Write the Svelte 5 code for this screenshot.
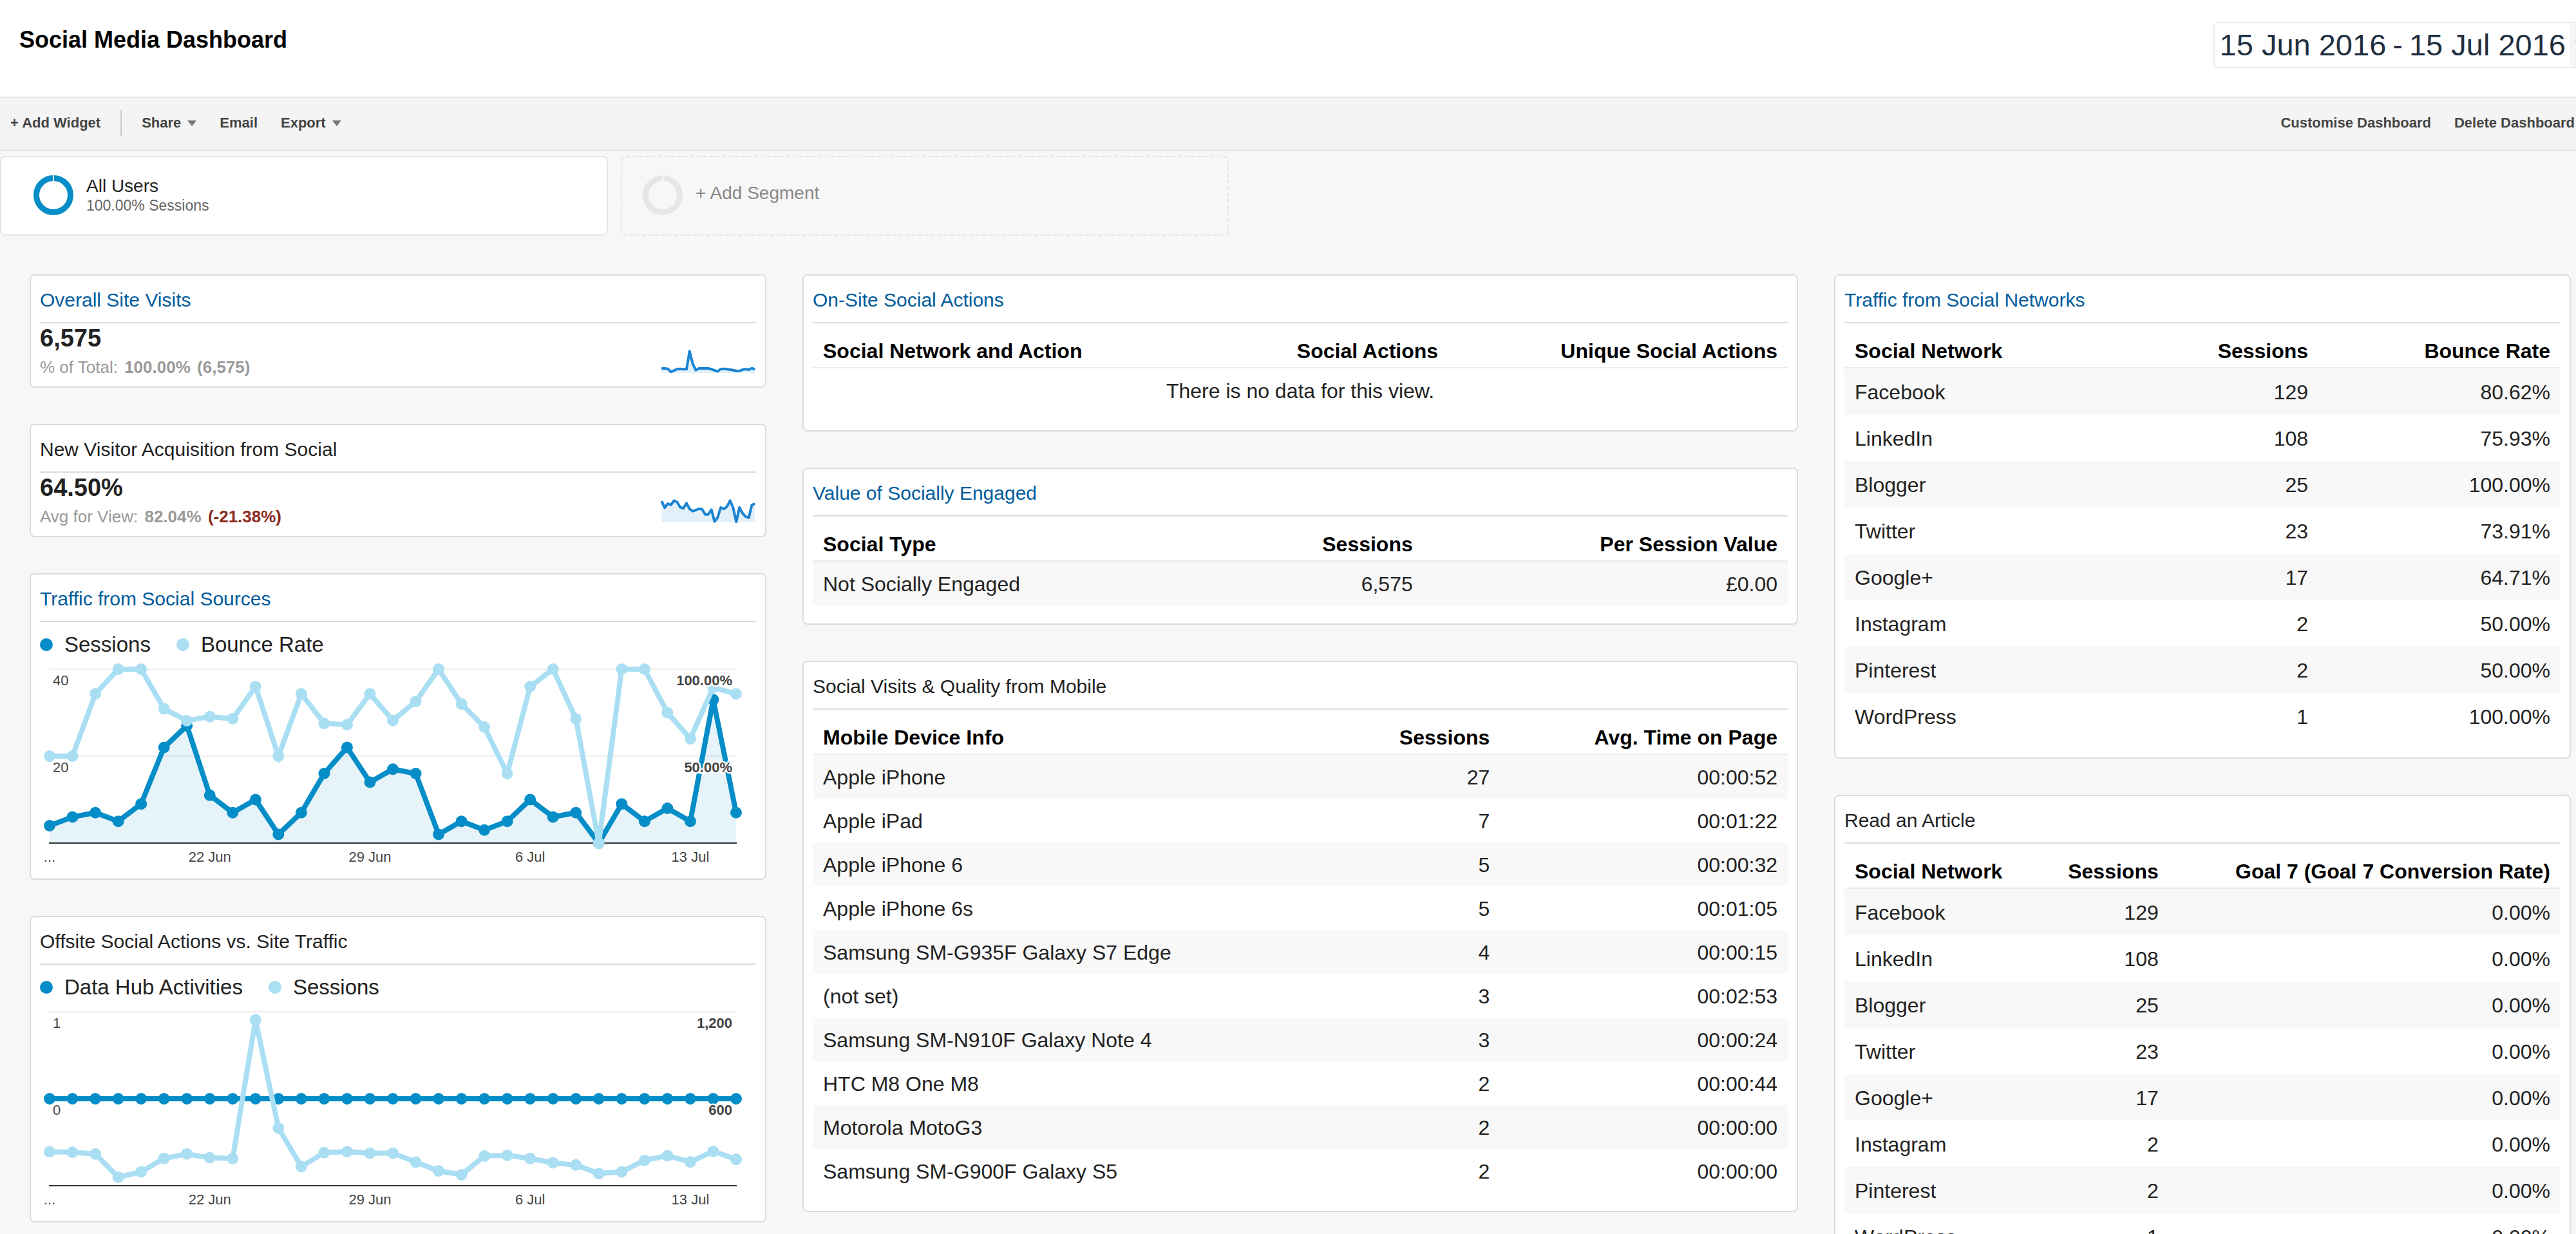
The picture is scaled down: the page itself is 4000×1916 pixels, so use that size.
<script lang="ts">
  type Series = { name: string; max: number; values: number[]; area?: boolean; min?: number };

  const visitsTrend = [126, 126, 128, 142, 136, 129, 128, 130, 130, 46, 105, 134, 126, 126, 126, 126, 130, 135, 140, 129, 128, 130, 132, 134, 138, 138, 132, 129, 132, 125, 130];
  const acquisitionTrend = [48, 79, 60, 66, 46, 53, 77, 82, 58, 85, 95, 90, 84, 86, 110, 110, 88, 143, 125, 78, 85, 74, 46, 80, 145, 78, 105, 120, 126, 66, 60];

  const metrics = [
    { title: 'Overall Site Visits', link: true, value: '6,575', label: '% of Total:', total: '100.00%', detail: '(6,575)', down: false, trend: visitsTrend },
    { title: 'New Visitor Acquisition from Social', link: false, value: '64.50%', label: 'Avg for View:', total: '82.04%', detail: '(-21.38%)', down: true, trend: acquisitionTrend }
  ];

  const charts: { title: string; link: boolean; left: string[]; right: string[]; dark: Series; light: Series }[] = [
    {
      title: 'Traffic from Social Sources',
      link: true,
      left: ['40', '20'],
      right: ['100.00%', '50.00%'],
      dark: {
        name: 'Sessions', max: 40, min: 0, area: true,
        values: [4, 6, 7, 5, 9, 22, 27, 11, 7, 10, 2, 7, 16, 22, 14, 17, 16, 2, 5, 3, 5, 10, 6, 7, 0, 9, 5, 8, 5, 33, 7]
      },
      light: {
        name: 'Bounce Rate', max: 100, min: 0,
        values: [50, 50, 85.8, 100, 100, 77.2, 70.4, 72.7, 71.5, 90, 50, 85.8, 68.8, 68.1, 85.8, 70.5, 81.4, 100, 80, 66.7, 40, 90, 100, 71.5, 0, 100, 100, 75, 60, 89.5, 85.8]
      }
    },
    {
      title: 'Offsite Social Actions vs. Site Traffic',
      link: false,
      left: ['1', '0'],
      right: ['1,200', '600'],
      dark: { name: 'Data Hub Activities', max: 1, min: -1, values: Array(31).fill(0) },
      light: {
        name: 'Sessions', max: 1200, min: 0,
        values: [234, 231, 219, 59, 96, 188, 219, 193, 187, 1144, 398, 132, 228, 235, 225, 225, 163, 102, 76, 205, 210, 188, 158, 143, 84, 96, 175, 207, 164, 237, 182]
      }
    }
  ];

  const ticks = [
    { at: 0, text: '...' },
    { at: 7, text: '22 Jun' },
    { at: 14, text: '29 Jun' },
    { at: 21, text: '6 Jul' },
    { at: 28, text: '13 Jul' }
  ];

  const networks: [string, string, string][] = [
    ['Facebook', '129', '80.62%'],
    ['LinkedIn', '108', '75.93%'],
    ['Blogger', '25', '100.00%'],
    ['Twitter', '23', '73.91%'],
    ['Google+', '17', '64.71%'],
    ['Instagram', '2', '50.00%'],
    ['Pinterest', '2', '50.00%'],
    ['WordPress', '1', '100.00%']
  ];

  const middle = [
    { title: 'On-Site Social Actions', link: true, head: ['Social Network and Action', 'Social Actions', 'Unique Social Actions'], widths: [40, 25.2, 34.8], rows: [] as string[][] },
    { title: 'Value of Socially Engaged', link: true, head: ['Social Type', 'Sessions', 'Per Session Value'], widths: [40, 22.6, 37.4], rows: [['Not Socially Engaged', '6,575', '£0.00']] },
    {
      title: 'Social Visits & Quality from Mobile',
      link: false,
      head: ['Mobile Device Info', 'Sessions', 'Avg. Time on Page'],
      widths: [50, 20.5, 29.5],
      rows: [
        ['Apple iPhone', '27', '00:00:52'],
        ['Apple iPad', '7', '00:01:22'],
        ['Apple iPhone 6', '5', '00:00:32'],
        ['Apple iPhone 6s', '5', '00:01:05'],
        ['Samsung SM-G935F Galaxy S7 Edge', '4', '00:00:15'],
        ['(not set)', '3', '00:02:53'],
        ['Samsung SM-N910F Galaxy Note 4', '3', '00:00:24'],
        ['HTC M8 One M8', '2', '00:00:44'],
        ['Motorola MotoG3', '2', '00:00:00'],
        ['Samsung SM-G900F Galaxy S5', '2', '00:00:00']
      ]
    }
  ];

  const right = [
    { title: 'Traffic from Social Networks', link: true, head: ['Social Network', 'Sessions', 'Bounce Rate'], widths: [40, 26.2, 33.8], rows: networks as string[][] },
    { title: 'Read an Article', link: false, head: ['Social Network', 'Sessions', 'Goal 7 (Goal 7 Conversion Rate)'], widths: [25, 20.3, 54.7], rows: networks.map(([n, s]) => [n, s, '0.00%']) }
  ];

  // Plot area inside the 1112 x 344 chart canvas
  const LEFT = 15;
  const RIGHT = 1081;
  const TOP = 19;
  const BOTTOM = 289;
  const MID = (TOP + BOTTOM) / 2;

  const px = (i: number) => LEFT + (i * (RIGHT - LEFT)) / 30;
  const py = (s: Series, v: number) => BOTTOM - ((v - (s.min ?? 0)) / (s.max - (s.min ?? 0))) * (BOTTOM - TOP);
  const line = (s: Series) => s.values.map((v, i) => `${px(i)},${py(s, v)}`).join(' ');
  const spark = (t: number[]) => t.map((v, i) => `${((40 + i * 14.5) / 3 - 12).toFixed(1)},${(v / 3 - 14).toFixed(1)}`).join(' ');
</script>

{#snippet heading(title: string, link: boolean)}
  <h2>{#if link}<a href="#report">{title}</a>{:else}{title}{/if}</h2>
{/snippet}

{#snippet ring()}
  <svg class="ring" viewBox="0 0 64 64" aria-hidden="true">
    <circle cx="32" cy="32" r="26.5" />
    <path d="M32 0V12" />
  </svg>
{/snippet}

{#snippet caret()}
  <svg class="caret" viewBox="0 0 14 9" aria-hidden="true"><path d="M0 0H14L7 9Z" /></svg>
{/snippet}

{#snippet plot(s: Series, tone: string)}
  <g class={tone}>
    <polyline points={line(s)} />
    {#each s.values as v, i}
      <circle cx={px(i)} cy={py(s, v)} r="9" />
    {/each}
  </g>
{/snippet}

{#snippet dataTable(w: { title: string; link: boolean; head: string[]; widths: number[]; rows: string[][] })}
  <section class="card">
    {@render heading(w.title, w.link)}
    <table>
      <colgroup>
        {#each w.widths as width}<col style="width: {width}%" />{/each}
      </colgroup>
      <thead>
        <tr>{#each w.head as h}<th scope="col">{h}</th>{/each}</tr>
      </thead>
      <tbody>
        {#each w.rows as row}
          <tr>{#each row as cell}<td>{cell}</td>{/each}</tr>
        {:else}
          <tr><td class="none" colspan="3">There is no data for this view.</td></tr>
        {/each}
      </tbody>
    </table>
  </section>
{/snippet}

<div class="page">
  <header>
    <h1>Social Media Dashboard</h1>
    <button class="dates">
      <span class="range"><span>15 Jun 2016</span><span>-</span><span>15 Jul 2016</span></span>
      <span class="open">{@render caret()}</span>
    </button>
  </header>

  <nav class="toolbar" aria-label="Dashboard actions">
    <button>+ Add Widget</button>
    <span class="divider"></span>
    <button>Share {@render caret()}</button>
    <button>Email</button>
    <button>Export {@render caret()}</button>
    <span class="spacer"></span>
    <button>Customise Dashboard</button>
    <button>Delete Dashboard</button>
  </nav>

  <div class="segments">
    <button class="segment">
      {@render ring()}
      <span class="names"><span class="name">All Users</span><span class="share">100.00% Sessions</span></span>
    </button>
    <button class="segment add">
      {@render ring()}
      <span class="names"><span class="name">+ Add Segment</span></span>
    </button>
  </div>

  <main>
    <div class="column">
      {#each metrics as m}
        <section class="card">
          {@render heading(m.title, m.link)}
          <div class="metric">
            <div>
              <p class="value">{m.value}</p>
              <p class="compare">{m.label} <b>{m.total}</b> <b class:down={m.down}>{m.detail}</b></p>
            </div>
            <svg class="spark" viewBox="0 0 148 36" aria-hidden="true">
              <polygon points="1.3,35 {spark(m.trend)} 146.3,35" />
              <polyline points={spark(m.trend)} />
            </svg>
          </div>
        </section>
      {/each}

      {#each charts as c}
        <section class="card chart">
          {@render heading(c.title, c.link)}
          <ul class="legend">
            <li><i class="dot"></i>{c.dark.name}</li>
            <li><i class="dot pale"></i>{c.light.name}</li>
          </ul>
          <svg class="canvas" viewBox="0 0 1112 344" role="img" aria-label={c.title}>
            <path class="grid" d="M{LEFT - 1} {TOP}H{RIGHT + 1}M{LEFT - 1} {MID}H{RIGHT + 1}" />
            {#if c.dark.area}
              <polygon class="area" points="{LEFT},{BOTTOM} {line(c.dark)} {RIGHT},{BOTTOM}" />
            {/if}
            <path class="axis" d="M{LEFT - 1} {BOTTOM}H{RIGHT + 1}" />
            {@render plot(c.dark, 'dark')}
            {@render plot(c.light, 'light')}
            {#each [TOP, MID] as y, i}
              <text x="20" y={y + 25}>{c.left[i]}</text>
              <text class="strong" x="1075" y={y + 25}>{c.right[i]}</text>
            {/each}
            {#each ticks as t}
              <text class="tick" x={px(t.at)} y="318">{t.text}</text>
            {/each}
          </svg>
        </section>
      {/each}
    </div>

    <div class="column">
      {#each middle as w}{@render dataTable(w)}{/each}
    </div>

    <div class="column roomy">
      {#each right as w}{@render dataTable(w)}{/each}
    </div>
  </main>
</div>

<style>
  :global(html) {
    scrollbar-width: none;
  }
  :global(body) {
    margin: 0;
    background: #f7f7f7;
  }
  .page {
    overflow-x: clip;
    font-family: 'Liberation Sans', Arial, sans-serif;
    color: #222;
  }
  h1,
  h2,
  p,
  ul {
    margin: 0;
    padding: 0;
    font-weight: normal;
  }
  button {
    display: flex;
    align-items: center;
    margin: 0;
    padding: 0;
    border: 0;
    background: none;
    color: inherit;
    font: inherit;
    text-align: left;
    white-space: nowrap;
    cursor: pointer;
  }

  header {
    display: flex;
    justify-content: space-between;
    align-items: flex-start;
    padding: 34px 0 44px 30px;
    border-bottom: 2px solid #e5e5e5;
    background: #fff;
  }
  h1 {
    color: #000;
    font-size: 36px;
    font-weight: bold;
    line-height: 56px;
  }
  .dates {
    align-items: stretch;
    margin-right: -36px;
    border: 2px solid #ededed;
    border-radius: 8px;
    color: #1f2f3f;
    font-size: 47px;
    line-height: 68px;
  }
  .range {
    display: flex;
    gap: 10px;
    padding: 0 6px 0 8px;
  }
  .open {
    display: flex;
    align-items: center;
    width: 44px;
    padding-left: 8px;
    box-sizing: border-box;
    background: #f5f5f5;
  }
  .open .caret {
    width: 20px;
    height: 12px;
    fill: #aaa;
  }

  .toolbar {
    display: flex;
    align-items: center;
    gap: 36px;
    height: 78px;
    padding: 0 2px 2px 16px;
    border-bottom: 2px solid #e5e5e5;
    background: #f4f4f4;
    color: #444;
    font-size: 22px;
    font-weight: bold;
    line-height: 28px;
  }
  .toolbar button {
    gap: 10px;
  }
  .divider {
    width: 2px;
    height: 40px;
    margin: 0 -5px;
    background: #ccc;
  }
  .spacer {
    flex: 1;
  }
  .caret {
    width: 14px;
    height: 9px;
    fill: #777;
  }

  .segments {
    display: grid;
    grid-template-columns: repeat(2, 944fr) 2072fr;
    gap: 20px;
    padding-top: 8px;
  }
  .segment {
    gap: 19px;
    padding: 27px 48px 29px 49px;
    border: 2px solid #e5e5e5;
    border-radius: 8px;
    background: #fff;
  }
  .segment.add {
    padding-left: 31px;
    border-style: dashed;
    background: none;
    color: #888;
  }
  .ring {
    width: 64px;
    height: 64px;
    fill: none;
  }
  .ring circle {
    stroke: #058dc7;
    stroke-width: 9;
  }
  .ring path {
    stroke: #fff;
    stroke-width: 2;
  }
  .add .ring circle {
    stroke: #e6e6e6;
  }
  .names {
    display: flex;
    flex-direction: column;
  }
  .name {
    font-size: 28px;
    line-height: 32px;
  }
  .share {
    color: #666;
    font-size: 23px;
    line-height: 28px;
  }
  .add .names {
    padding-bottom: 6px;
  }

  main {
    display: grid;
    grid-template-columns: 1144fr 1546fr 1144fr;
    align-items: start;
    gap: 56px;
    padding: 60px 8px 56px 46px;
  }
  .column {
    display: grid;
    gap: 56px;
    min-width: 0;
  }
  .card {
    padding: 0 14px;
    border: 2px solid #dcdcdc;
    border-radius: 8px;
    background: #fff;
  }
  h2 {
    padding: 20px 0 16px;
    border-bottom: 2px solid #dcdcdc;
    font-size: 30px;
    line-height: 36px;
  }
  a {
    color: #005c9c;
    text-decoration: none;
  }

  .metric {
    display: flex;
    justify-content: space-between;
    align-items: flex-end;
    padding-bottom: 8px;
  }
  .value {
    font-size: 38px;
    font-weight: bold;
    line-height: 46px;
  }
  .compare {
    color: #999;
    font-size: 26px;
    line-height: 44px;
  }
  .compare b {
    margin-left: 3px;
  }
  .down {
    color: #8c2a20;
  }
  .spark {
    width: 148px;
    height: 36px;
    margin-bottom: 12px;
    overflow: visible;
  }
  .spark polygon {
    fill: #e3f0f9;
  }
  .spark polyline {
    fill: none;
    stroke: #1b84d2;
    stroke-width: 4;
    stroke-linejoin: round;
  }

  .legend {
    display: flex;
    gap: 40px;
    padding: 17px 0 1px;
    font-size: 33px;
    line-height: 36px;
    list-style: none;
  }
  .legend li {
    display: flex;
    align-items: center;
    gap: 18px;
  }
  .dot {
    width: 20px;
    height: 20px;
    border-radius: 50%;
    background: #058dc7;
  }
  .dot.pale {
    background: #aadff3;
  }
  .canvas {
    display: block;
    width: 100%;
    height: auto;
  }
  .grid {
    fill: none;
    stroke: #eee;
    stroke-width: 2;
    shape-rendering: crispEdges;
  }
  .axis {
    stroke: #333;
    stroke-width: 2;
    shape-rendering: crispEdges;
  }
  .area {
    fill: #058dc7;
    fill-opacity: 0.1;
  }
  .canvas polyline {
    fill: none;
    stroke-width: 8;
  }
  .dark {
    fill: #058dc7;
  }
  .dark polyline {
    stroke: #058dc7;
  }
  .light {
    fill: #aadff3;
  }
  .light polyline {
    stroke: #aadff3;
  }
  text {
    fill: #444;
    stroke: #fff;
    stroke-width: 5;
    paint-order: stroke;
    font-size: 22px;
  }
  .strong {
    font-weight: bold;
    text-anchor: end;
  }
  .tick {
    stroke: none;
    text-anchor: middle;
  }

  table {
    width: 100%;
    margin-bottom: 28px;
    border-spacing: 0;
    table-layout: fixed;
    font-size: 32px;
    line-height: 36px;
  }
  th {
    padding: 25px 16px 7px;
    border-bottom: 2px solid #ececec;
    color: #000;
    font-weight: bold;
    text-align: right;
    white-space: nowrap;
  }
  td {
    padding: 17px 16px 15px;
    text-align: right;
    white-space: nowrap;
  }
  .roomy td {
    padding: 19px 16px 17px;
  }
  th:first-child,
  td:first-child {
    text-align: left;
  }
  tbody tr:nth-child(odd) {
    background: #f8f8f8;
  }
  td.none:first-child {
    background: #fff;
    text-align: center;
  }
</style>
